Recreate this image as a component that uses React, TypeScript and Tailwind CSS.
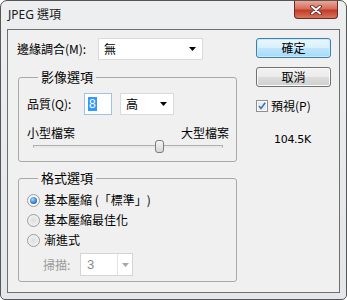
// JPEG 選項 — Windows 7 style Photoshop export dialog.

const CJK = "font-['Noto_Sans_CJK_TC','Noto_Sans',sans-serif]";

function Arrow({ color = '#000' }: { color?: string }) {
  return (
    <svg width="7" height="4" viewBox="0 0 7 4" className="shrink-0">
      <path d="M0 0h7L3.5 4z" fill={color} />
    </svg>
  );
}

function Combo({ value, width, className = '' }: { value: string; width: string; className?: string }) {
  return (
    <div
      className={`flex h-[22px] items-center justify-between border border-[#dadada] bg-white pl-[5px] pr-[6px] ${width} ${className}`}
    >
      <span className="leading-none">{value}</span>
      <Arrow />
    </div>
  );
}

function Radio({ checked, label }: { checked?: boolean; label: string }) {
  return (
    <div className="grid h-[20px] grid-cols-[13px_1fr] items-center gap-x-[4px]">
      <div
        className={`flex h-[13px] w-[13px] items-center justify-center rounded-full border border-[#9c9c9c] ${
          checked
            ? 'bg-[radial-gradient(circle,#ffffff,#f2f2f2)]'
            : 'bg-[radial-gradient(circle,#dedede,#f9f9f9)]'
        }`}
      >
        {checked && (
          <div className="h-[7px] w-[7px] rounded-full bg-[radial-gradient(circle_at_40%_35%,#a6d8ff,#2f7fd0_60%,#1c3f6e)]" />
        )}
      </div>
      <div className="h-[12px] text-[12px] leading-[12px] text-black">{label}</div>
    </div>
  );
}

function Button({ label, primary }: { label: string; primary?: boolean }) {
  return (
    <div
      className={`flex h-[20px] w-[75px] items-center justify-center rounded-[3px] border ${
        primary
          ? 'border-[#3c7fb1] bg-[linear-gradient(#eaf6fd_0%,#d9f0fc_50%,#bee6fd_51%,#a7d9f5_100%)] shadow-[inset_0_0_0_1px_#c6ecfc]'
          : 'border-[#707070] bg-[linear-gradient(#f2f2f2_0%,#ebebeb_50%,#dddddd_51%,#cfcfcf_100%)] shadow-[inset_0_0_0_1px_#fbfbfb]'
      }`}
    >
      <span className="leading-none">{label}</span>
    </div>
  );
}

export default function App() {
  return (
    <div
      lang="zh-Hant"
      className={`h-[300px] w-[347px] bg-white text-[12px] text-black [text-spacing-trim:space-all] ${CJK}`}
    >
      <div className="flex h-full flex-col rounded-t-[7px] rounded-b-[5px] border border-[#565656] bg-[linear-gradient(#edeef0,#e3e6ea)] px-[6px] pb-[6px]">
        {/* title bar */}
        <div className="flex h-[28px] shrink-0 justify-between">
          <div className="flex items-center pl-[1px] pb-[1px] font-['Noto_Sans','Noto_Sans_CJK_TC',sans-serif] text-[12px] text-[#1a1a1a]">
            JPEG 選項
          </div>
          <div className="mr-[2px] flex h-[18px] w-[44px] items-center justify-center rounded-b-[4px] border border-t-0 border-[#6b2a22] bg-[linear-gradient(#eaa898_0%,#d66e5c_45%,#c53a27_55%,#d67660_100%)]">
            <svg width="12" height="10" viewBox="0 0 12 10">
              <path d="M2 1.5l8 7M10 1.5l-8 7" stroke="#4a2320" strokeWidth="3.6" strokeLinecap="round" />
              <path d="M2 1.5l8 7M10 1.5l-8 7" stroke="#ffffff" strokeWidth="2" strokeLinecap="round" />
            </svg>
          </div>
        </div>

        {/* client area */}
        <div className="flex flex-1 border border-[#6f6f6f] bg-[#f0f0f0] pl-[9px] pt-[8px]">
          <div className="flex w-[220px] flex-col">
            <div className="flex h-[22px] items-center">
              <span className="w-[81px] leading-none">邊緣調合(M):</span>
              <Combo value="無" width="w-[105px]" />
            </div>

            <fieldset className="ml-[1px] mt-[10px] rounded-[3px] border border-[#a9a9a9] pb-[7px] pl-[8px] pr-[7px]">
              <legend className="ml-[11px] px-[3px] text-[13px] leading-[14px]">影像選項</legend>
              <div className="mt-[9px] flex h-[22px] items-center">
                <span className="w-[57px] leading-none">品質(Q):</span>
                <div className="flex h-[22px] w-[28px] items-center border border-[#9cc3ea] bg-white pl-[3px]">
                  <span className="bg-[#3399ff] px-[1px] font-['Liberation_Sans',sans-serif] leading-[14px] text-white">8</span>
                </div>
                <Combo value="高" width="w-[54px]" className="ml-[8px]" />
              </div>
              <div className="mt-[11px] flex justify-between leading-[14px]">
                <span>小型檔案</span>
                <span>大型檔案</span>
              </div>
              <div className="relative mx-[6px] h-[14px]">
                <div className="absolute left-0 right-0 top-[5px] h-[3px] border border-[#b0b0b0] border-b-[#e7eaea] bg-[#e7eaea]" />
                <div className="absolute left-[122px] top-0 h-[13px] w-[9px] rounded-[3px] border border-[#7d7d7d] bg-[linear-gradient(#f6f6f6,#d6d6d6)]" />
              </div>
            </fieldset>

            <fieldset className="ml-[1px] mt-[9px] rounded-[3px] border border-[#a9a9a9] pb-[5px] pl-[8px]">
              <legend className="ml-[11px] px-[3px] text-[13px] leading-[14px]">格式選項</legend>
              <div className="mt-[5px] flex flex-col">
                <Radio checked label="基本壓縮 (「標準」)" />
                <Radio label="基本壓縮最佳化" />
                <Radio label="漸進式" />
              </div>
              <div className="mt-[3px] flex h-[23px] items-center pl-[16px]">
                <span className="w-[37px] leading-none text-[#9a9a9a]">掃描:</span>
                <div className="flex h-[23px] w-[53px] items-center border border-[#d4d4d4] bg-white">
                  <span className="w-[36px] pl-[6px] font-['Liberation_Sans',sans-serif] text-[13px] leading-none text-[#8a8a8a]">3</span>
                  <div className="flex h-full flex-1 items-center justify-center border-l border-[#e4e4e4]">
                    <Arrow color="#a8a8a8" />
                  </div>
                </div>
              </div>
            </fieldset>
          </div>

          <div className="ml-[19px] flex w-[75px] flex-col">
            <Button primary label="確定" />
            <div className="mt-[9px]">
              <Button label="取消" />
            </div>
            <div className="mt-[12px] flex h-[14px] items-center">
              <svg width="12" height="12" viewBox="0 0 12 12" className="shrink-0">
                <rect x="0.5" y="0.5" width="11" height="11" fill="#fff" stroke="#8e8f8f" />
                <rect x="2" y="2" width="8" height="8" fill="#e6ecf3" />
                <path d="M3 6l2 2.5L9.2 2.8" stroke="#4b6fa8" strokeWidth="1.6" fill="none" />
              </svg>
              <span className="ml-[3px] leading-none">預視(P)</span>
            </div>
            <div className="mt-[21px] pl-[18px] font-['DejaVu_Sans',sans-serif] text-[11px] leading-none tracking-[-0.3px]">
              104.5K
            </div>
          </div>
        </div>
      </div>
    </div>
  );
}
